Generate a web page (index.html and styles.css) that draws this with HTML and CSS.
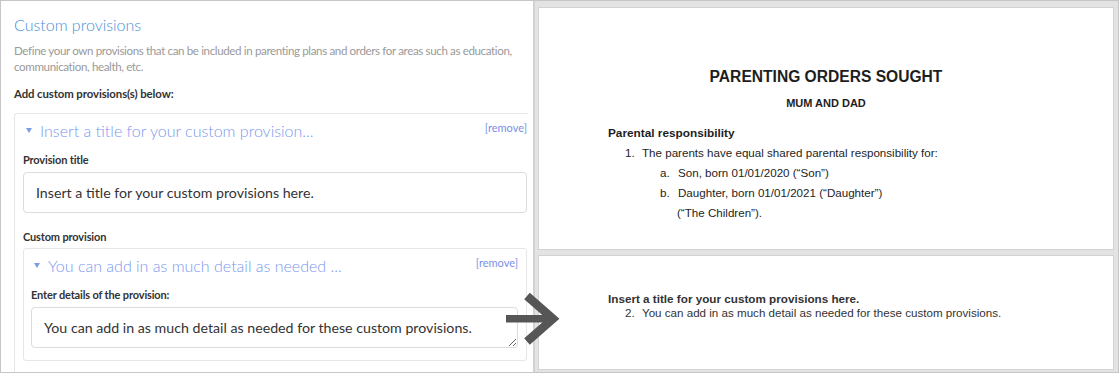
FILE: index.html
```html
<!DOCTYPE html>
<html lang="en">
<head>
<meta charset="utf-8">
<title>Custom provisions</title>
<link rel="stylesheet" href="styles.css">
</head>
<body>
<div class="frame">
  <section class="editor">
    <h1 class="editor-title">Custom provisions</h1>
    <p class="editor-desc">Define your own provisions that can be included in parenting plans and orders for areas such as education, communication, health, etc.</p>
    <p class="editor-sub">Add custom provisions(s) below:</p>
    <div class="card">
      <div class="card-head">
        <span class="caret"></span>
        <span class="card-title">Insert a title for your custom provision...</span>
        <a class="remove">[remove]</a>
      </div>
      <label class="field-label">Provision title</label>
      <input class="text-input" type="text" value="Insert a title for your custom provisions here.">
      <label class="field-label field-label-gap">Custom provision</label>
      <div class="card inner-card">
        <div class="card-head inner-head">
          <span class="caret"></span>
          <span class="card-title">You can add in as much detail as needed ...</span>
          <a class="remove">[remove]</a>
        </div>
        <label class="field-label">Enter details of the provision:</label>
        <textarea class="text-area" rows="1">You can add in as much detail as needed for these custom provisions.</textarea>
      </div>
    </div>
  </section>
  <section class="preview">
    <div class="page page-main">
      <h2 class="doc-title">PARENTING ORDERS SOUGHT</h2>
      <p class="doc-parties">MUM AND DAD</p>
      <p class="doc-section">Parental responsibility</p>
      <div class="doc-item lvl1"><span class="num">1.</span><span>The parents have equal shared parental responsibility for:</span></div>
      <div class="doc-item lvl2"><span class="num">a.</span><span>Son, born 01/01/2020 (“Son”)</span></div>
      <div class="doc-item lvl2"><span class="num">b.</span><span>Daughter, born 01/01/2021 (“Daughter”)</span></div>
      <div class="doc-item lvl3">(“The Children”).</div>
    </div>
    <div class="page page-custom">
      <p class="doc-section tight">Insert a title for your custom provisions here.</p>
      <div class="doc-item lvl1 tight"><span class="num">2.</span><span>You can add in as much detail as needed for these custom provisions.</span></div>
    </div>
  </section>
  <svg class="arrow" width="60" height="54" viewBox="0 0 60 54">
    <rect x="2" y="23" width="44" height="7.5" fill="#565656"/>
    <polyline points="23,4 49,26.75 23,49.5" fill="none" stroke="#565656" stroke-width="8.5" stroke-linejoin="miter" stroke-miterlimit="10"/>
  </svg>
</div>
</body>
</html>
```

FILE: styles.css
```css
* { box-sizing: border-box; }
html, body { margin: 0; padding: 0; }
body {
  width: 1119px;
  height: 373px;
  overflow: hidden;
  background: #fff;
  font-family: "Lato", "Noto Sans", sans-serif;
}
.frame {
  position: relative;
  display: flex;
  width: 1119px;
  height: 373px;
  border: 1px solid #c6c6c6;
}
.editor {
  width: 534px;
  flex: none;
  padding: 0 5px 0 13px;
  border-right: 2px solid #d2d2d2;
  overflow: hidden;
  background: #fff;
}
.editor-title {
  margin: 13px 0 0;
  font-family: "Lato", sans-serif;
  font-weight: 300;
  font-size: 16px;
  line-height: 22px;
  color: #4a8fd8;
}
.editor-desc {
  margin: 7px 0 0;
  font-size: 11.6px;
  letter-spacing: -0.38px;
  line-height: 16px;
  color: #9a9a9a;
}
.editor-sub {
  margin: 11px 0 0;
  font-size: 11.4px;
  letter-spacing: -0.1px;
  line-height: 16px;
  font-weight: 700;
  color: #333;
}
.card {
  margin-top: 11px;
  border: 1px solid #e6e6e6;
  border-right: 0;
  border-bottom: 0;
  border-radius: 3px 0 0 0;
  padding: 0 1px 12px 8px;
}
.card-head {
  display: flex;
  align-items: center;
  height: 32px;
  padding: 0 0 0 3px;
}
.caret {
  width: 0;
  height: 0;
  border-left: 3px solid transparent;
  border-right: 3px solid transparent;
  border-top: 5px solid #7d9be6;
  margin-right: 8px;
}
.card-title {
  flex: 1;
  font-weight: 300;
  font-size: 16px;
  color: #7b98ee;
  white-space: nowrap;
}
.remove {
  margin-bottom: 5px;
  font-size: 11px;
  color: #7b8fe6;
}
.field-label {
  display: block;
  margin-top: 6px;
  font-size: 11px;
  letter-spacing: -0.15px;
  line-height: 16px;
  font-weight: 700;
  color: #333;
}
.field-label-gap { margin-top: 16px; }
.text-input, .text-area {
  display: block;
  width: 100%;
  margin-top: 4px;
  height: 41px;
  border: 1px solid #dcdcdc;
  border-radius: 4px;
  padding: 0 12px;
  font-family: "Lato", sans-serif;
  font-size: 14.2px;
  color: #333;
  background: #fff;
  outline: none;
}
.text-area {
  padding: 10px 12px 0;
  line-height: 20px;
  resize: vertical;
  overflow: hidden;
}
.inner-card {
  margin-top: 3px;
  border: 1px solid #e6e6e6;
  border-radius: 3px;
  padding: 0 8px 12px 7px;
}
.preview {
  flex: 1;
  display: flex;
  flex-direction: column;
  gap: 5px;
  padding: 6px 4px 2px 3px;
  background: #e3e3e3;
}
.page {
  background: #fff;
  border: 1px solid #d2d2d2;
  padding-left: 69px;
  font-family: "Liberation Sans", Arial, sans-serif;
  color: #1e1e1e;
}
.page-main { height: 243px; padding-top: 60px; }
.page-custom { flex: 1; padding-top: 36px; }
.doc-title {
  margin: 0 0 0 -69px;
  text-align: center;
  font-size: 15.6px;
  line-height: 18px;
  font-weight: 700;
}
.doc-parties {
  margin: 10px 0 0 -69px;
  text-align: center;
  font-size: 11px;
  line-height: 14px;
  font-weight: 700;
}
.doc-section {
  margin: 13px 0 0;
  font-size: 11.8px;
  line-height: 20px;
  font-weight: 700;
}
.doc-item {
  display: flex;
  font-size: 11.6px;
  line-height: 20px;
}
.doc-item .num { width: 17px; flex: none; }
.lvl1 { padding-left: 17px; }
.lvl2 { padding-left: 52px; }
.lvl2 .num { width: 18px; }
.lvl3 { padding-left: 69px; }
.page-custom .doc-section { font-size: 11.7px; color: #333; }
.tight { line-height: 14px; margin-top: 0; }
.page-custom .doc-item { color: #333; }
.arrow {
  position: absolute;
  left: 503px;
  top: 291px;
}
```
